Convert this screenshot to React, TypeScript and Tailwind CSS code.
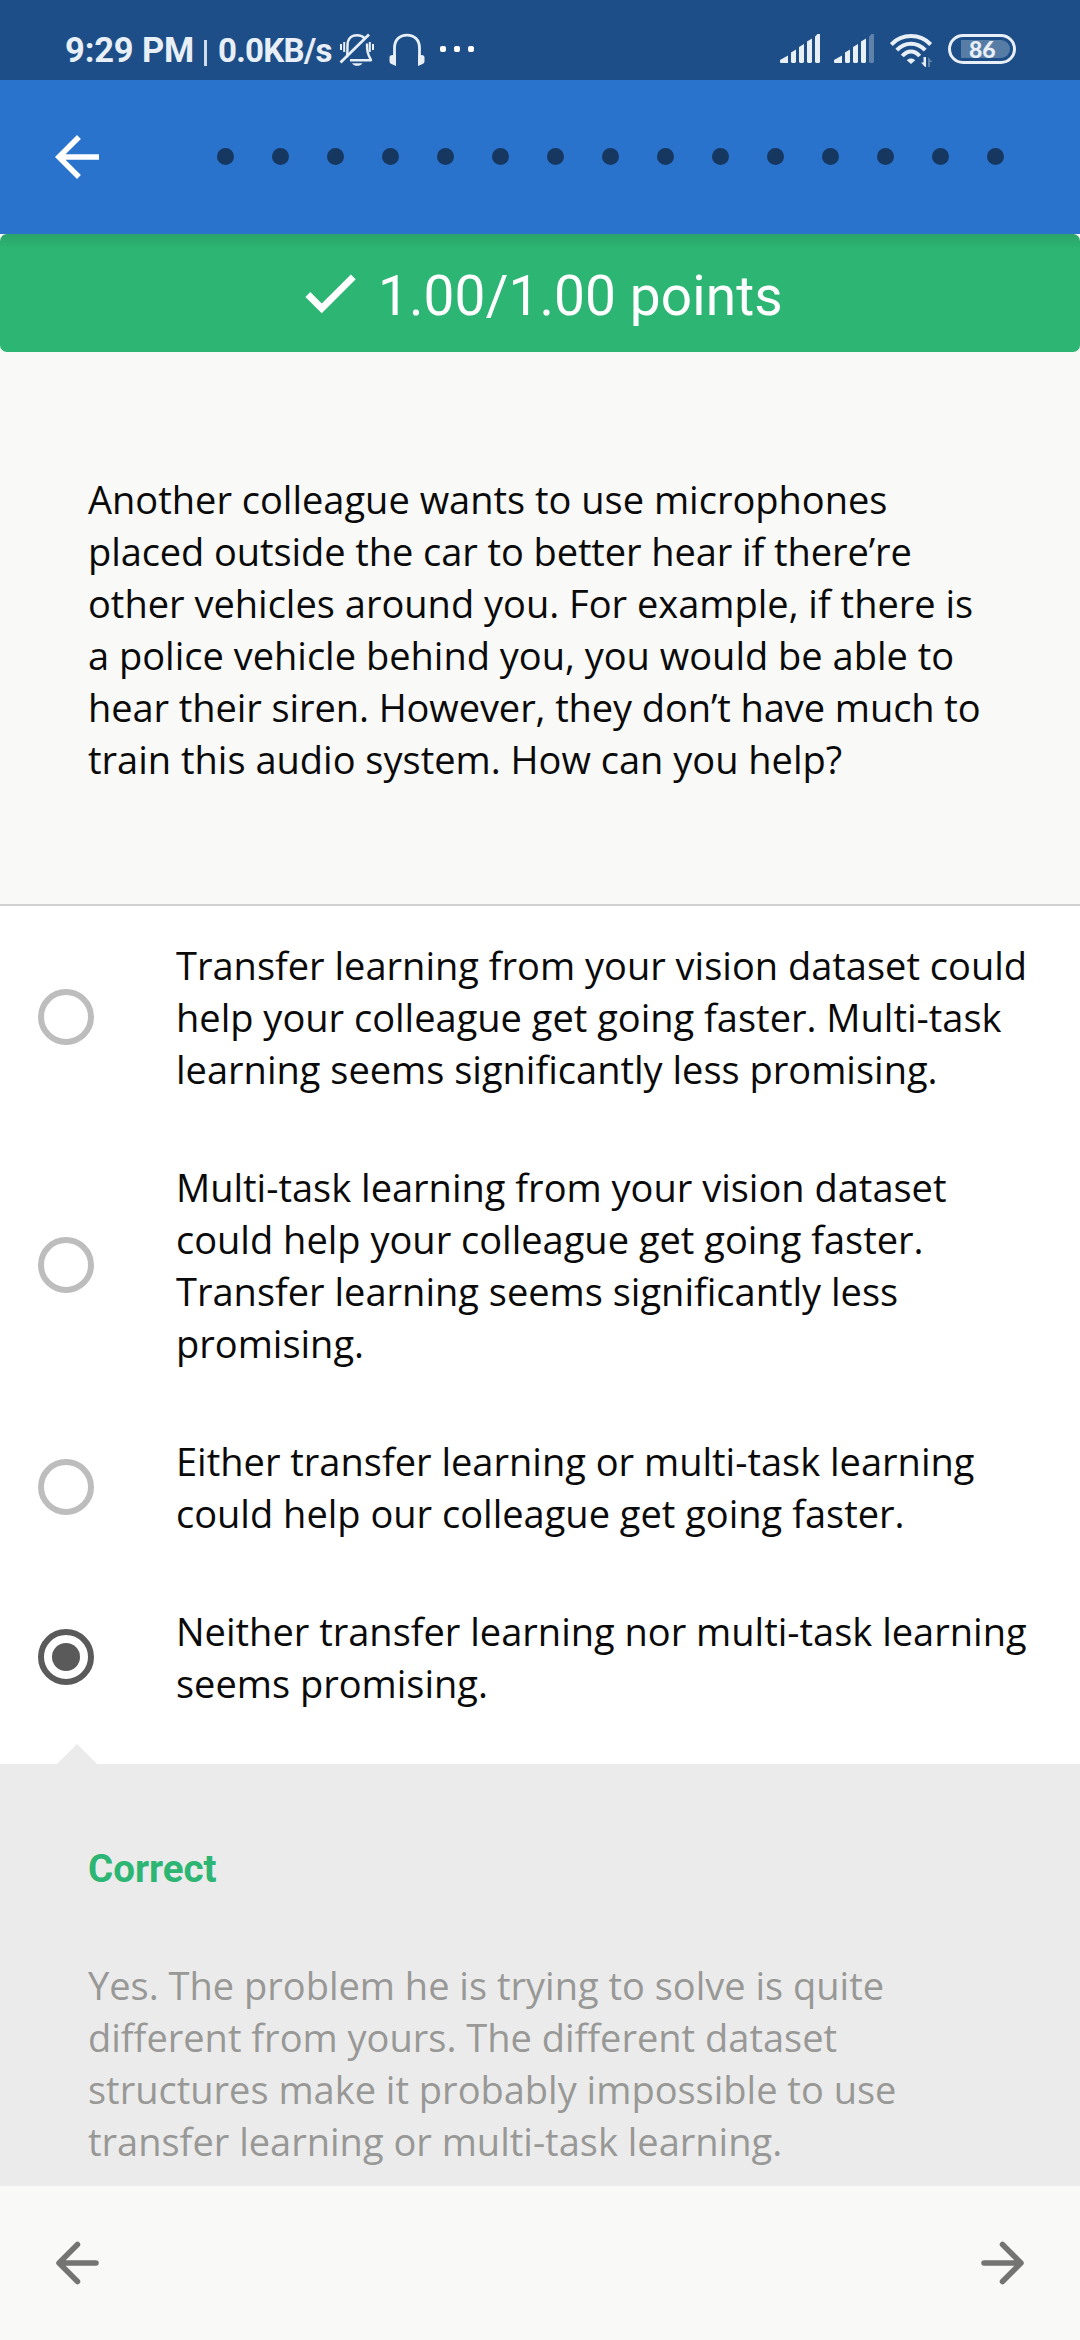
import React from "react";

const options: { lines: string[]; selected?: boolean }[] = [
  {
    lines: [
      "Transfer learning from your vision dataset could",
      "help your colleague get going faster. Multi-task",
      "learning seems significantly less promising.",
    ],
  },
  {
    lines: [
      "Multi-task learning from your vision dataset",
      "could help your colleague get going faster.",
      "Transfer learning seems significantly less",
      "promising.",
    ],
  },
  {
    lines: [
      "Either transfer learning or multi-task learning",
      "could help our colleague get going faster.",
    ],
  },
  {
    lines: [
      "Neither transfer learning nor multi-task learning",
      "seems promising.",
    ],
    selected: true,
  },
];

const question = [
  "Another colleague wants to use microphones",
  "placed outside the car to better hear if there’re",
  "other vehicles around you. For example, if there is",
  "a police vehicle behind you, you would be able to",
  "hear their siren. However, they don’t have much to",
  "train this audio system. How can you help?",
];

const explanation = [
  "Yes. The problem he is trying to solve is quite",
  "different from yours. The different dataset",
  "structures make it probably impossible to use",
  "transfer learning or multi-task learning.",
];

// Lines with an apostrophe are set slightly tighter than the rest.
function Lines({ lines }: { lines: string[] }) {
  return (
    <>
      {lines.map((line) => (
        <span
          key={line}
          className={
            line.includes("’")
              ? "block whitespace-nowrap tracking-[-0.08px]"
              : "block whitespace-nowrap"
          }
        >
          {line}
        </span>
      ))}
    </>
  );
}

function BellOff() {
  return (
    <svg className="ml-[8px] h-[34px] w-[36px] shrink-0" viewBox="0 0 36 34" fill="none" stroke="#e8eff7" strokeWidth="2.4">
      <path d="M8 24C8.500 20 8.500 18 8.500 12.500C8.500 6 12 2.200 18 2.200C21 2.200 23.500 3.200 25.500 5" />
      <path d="M28 10.500C28 18 28.500 21 32 27.200H11" strokeLinejoin="round" />
      <path d="M1.500 29.500L30 1.500" strokeWidth="2.700" />
      <path d="M2 11v6M5.200 9v10M30.800 9v10M34 11v6" strokeWidth="2" />
      <path d="M13 30.200H23.500C22 32 20.500 32.800 18.200 32.800S14.500 32 13 30.200Z" fill="#e8eff7" stroke="none" />
    </svg>
  );
}

function Headphones() {
  return (
    <svg className="ml-[14px] h-[34px] w-[36px] shrink-0" viewBox="0 0 36 34">
      <path d="M5.500 31V15C5.500 7 10.500 2.200 18 2.200S30.500 7 30.500 15V31" fill="none" stroke="#e8eff7" strokeWidth="2.800" />
      <path d="M4 22H7V33L2.500 31C1 30.400 0.500 29.500 0.500 28V24.500C0.500 22.800 1.700 22 4 22ZM32 22H29V33L33.500 31C35 30.400 35.500 29.500 35.500 28V24.500C35.500 22.800 34.300 22 32 22Z" fill="#e8eff7" />
    </svg>
  );
}

function Signal({ weak = false }: { weak?: boolean }) {
  return (
    <svg className="mr-[14px] h-[30px] w-[40px] shrink-0" viewBox="0 0 40 30" fill="#e8eff7">
      <path d="M0 26L8 21.500V29H1Q0 29 0 28Z" />
      <path d="M11 18.500L16 15.500V28L15 29H12L11 28Z" />
      <path d="M19 13L24 10V28L23 29H20L19 28Z" />
      <path d="M27 7.500L32 4.500V28L31 29H28L27 28Z" />
      <path d="M35 2.500L37.500 0H40V28L39 29H36L35 28Z" opacity={weak ? 0.32 : 1} />
    </svg>
  );
}

function Wifi() {
  return (
    <svg className="ml-[2px] h-[34px] w-[43px] shrink-0" viewBox="0 0 43 34" fill="none" stroke="#e8eff7" strokeWidth="4">
      <path d="M1.300 10.500C12 -0.700 30 -0.700 40.700 10.500" />
      <path d="M6.800 16.200C15 7.500 27 7.500 35.200 16.200" />
      <path d="M12.300 22C17.500 16 24.500 16 29.700 22" />
      <path d="M16.800 26.200C19 24 23 24 25.200 26.200L21 30Z" fill="#e8eff7" stroke="none" />
      <path d="M33.500 23H36V33H35L31 28.500H33.500Z" fill="#e8eff7" stroke="none" />
      <path d="M38 23L42.500 28H40V33H38Z" fill="#e8eff7" opacity="0.320" stroke="none" />
    </svg>
  );
}

function StatusBar() {
  return (
    <div className="flex h-[80px] items-start bg-[#1d4e87] font-['Roboto'] text-[#e8eff7]">
      <div className="flex h-[36px] w-full pt-[33px]">
        <span className="ml-[65px] w-[130px] shrink-0 -translate-y-[3px] whitespace-nowrap text-[34.5px] leading-[40px] font-bold tracking-[-0.15px]">9:29 PM</span>
        <span className="ml-[9px] mt-[7px] h-[26px] w-[3px] shrink-0 bg-[#cfdcea]" />
        <span className="ml-[11px] w-[113px] shrink-0 -translate-y-[2px] whitespace-nowrap text-[33px] leading-[40px] font-bold tracking-[-0.7px]">0.0KB/s</span>
        <BellOff />
        <Headphones />
        <div className="ml-[15px] mt-[13px] flex gap-[8px]">
          <span className="size-[6px] rounded-[2px] bg-white" />
          <span className="size-[6px] rounded-[2px] bg-white" />
          <span className="size-[6px] rounded-[2px] bg-white" />
        </div>
        <div className="mr-[64px] ml-auto flex pt-px">
          <Signal />
          <Signal weak />
          <Wifi />
          <div className="ml-[15px] flex h-[30px] w-[68px] items-center rounded-full border-[3px] border-[#e8eff7] pl-[10px]">
            <div className="flex h-[18px] w-[49px] items-center rounded-l-[2px] rounded-r-full bg-[#577ca6] pl-[8px] font-['Lato'] text-[23px] leading-[18px] font-black">
              86
            </div>
          </div>
        </div>
      </div>
    </div>
  );
}

function NavArrow({ flip = false }: { flip?: boolean }) {
  return (
    <svg className={flip ? "h-[44px] w-[44px] -scale-x-100" : "h-[44px] w-[44px]"} viewBox="0 0 44 44" fill="none" stroke="#747572" strokeWidth="5.500" strokeLinecap="round">
      <path d="M41 22H5M22.500 3.500L4 22L22.500 40.500" strokeLinejoin="round" />
    </svg>
  );
}

function Radio({ selected }: { selected?: boolean }) {
  return (
    <span
      className={
        selected
          ? "flex size-[56px] shrink-0 items-center justify-center rounded-full border-[6px] border-[#5a5a5a]"
          : "flex size-[56px] shrink-0 items-center justify-center rounded-full border-[6px] border-[#bdbdbd]"
      }
    >
      {selected && <span className="size-[28px] rounded-full bg-[#5a5a5a]" />}
    </span>
  );
}

export default function App() {
  return (
    <div className="flex h-[2340px] w-[1080px] flex-col overflow-hidden bg-white font-['Open_Sans',sans-serif] text-[38px] leading-[52px] text-[#0a0a0a]">
      <StatusBar />
      <header className="flex h-[154px] shrink-0 items-center bg-[#2a73cd] pl-[44px]">
        <svg className="size-[66px]" viewBox="0 0 24 24" fill="#fff">
          <path d="M20 11H7.830l5.590-5.590L12 4l-8 8 8 8 1.410-1.410L7.830 13H20v-2z" />
        </svg>
        <div className="mb-px ml-[107px] flex gap-[38px]">
          {Array.from({ length: 15 }, (_, i) => (
            <span key={i} className="size-[17px] rounded-full bg-[#16375f]" />
          ))}
        </div>
      </header>

      <section className="h-[672px] shrink-0 border-b-2 border-[#d0d0d0] bg-[#f9f9f7]">
        <div className="flex h-[118px] items-center rounded-[7px] bg-[#2cb573] bg-linear-to-b from-[#2ba469] to-[#2cb573] to-[15px] pl-[297px] font-['Roboto'] text-[55px] text-white">
          <svg className="size-[66px] shrink-0" viewBox="0 0 24 24" fill="#fff" stroke="#fff" strokeWidth="0.500">
            <path d="M9 16.170L4.830 12l-1.420 1.410L9 19 21 7l-1.410-1.410z" />
          </svg>
          <span className="ml-[15px] mt-[6px] whitespace-nowrap tracking-[0.1px]">1.00/1.00 points</span>
        </div>
        <p className="mt-[121px] ml-[88px]">
          <Lines lines={question} />
        </p>
      </section>

      <main className="h-[858px] shrink-0">
        {options.map((option) => (
          <div key={option.lines[0]} className="flex items-center py-[33px] pl-[38px]">
            <Radio selected={option.selected} />
            <p className="ml-[82px]">
              <Lines lines={option.lines} />
            </p>
          </div>
        ))}
        <svg className="mt-[2px] ml-[57px] h-[20px] w-[40px]" viewBox="0 0 40 20" fill="#ebebeb">
          <path d="M0 20L20 0L40 20Z" />
        </svg>
      </main>

      <section className="h-[422px] shrink-0 bg-[#ebebeb] pt-[79px] pl-[88px] text-[#989896]">
        <h2 className="font-['Roboto'] text-[38.5px] font-bold text-[#2cb573]">Correct</h2>
        <p className="mt-[64px]">
          <Lines lines={explanation} />
        </p>
      </section>

      <footer className="flex h-[154px] shrink-0 items-center justify-between bg-[#f9f9f7] px-[55px]">
        <NavArrow />
        <NavArrow flip />
      </footer>
    </div>
  );
}
